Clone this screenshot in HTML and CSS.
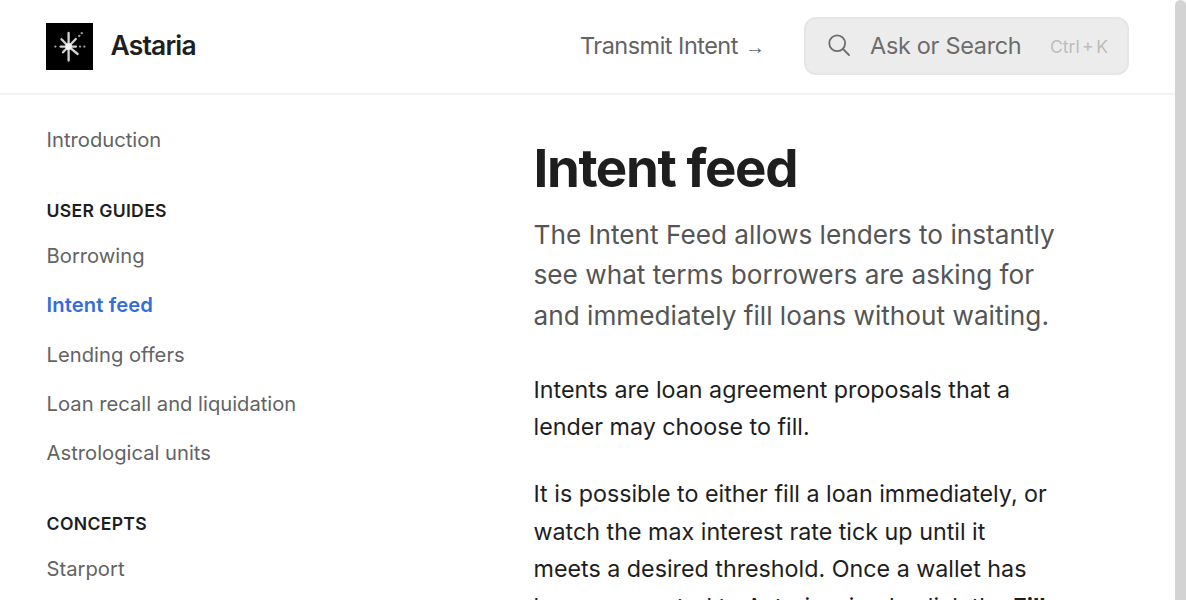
FILE: index.html
```
<!DOCTYPE html>
<html lang="en">
<head>
<meta charset="utf-8">
<title>Intent feed | Astaria</title>
<link rel="stylesheet" href="styles.css">
</head>
<body>
<div class="page">
  <div class="site">
    <header class="header">
      <a class="brand">
        <svg class="logo" viewBox="0 0 47 47">
          <rect width="47" height="47" fill="#000"/>
          <g stroke="#d2d2d2" stroke-width="2.3" stroke-linecap="round" fill="none">
            <path d="M22.600 10v27.600M15.500 16.300l7.100 7.300M22.600 23.500l7.200-7.500M22.600 23.500l-5.600 5.800M22.600 23.500l9 7.500"/>
            <path d="M14.500 23.600h15.500"/>
            <path d="M9.300 23.600h.1M34 23.600h.1M38.300 23.600h.1M33.200 13h.1M35.700 10.200h.1" stroke="#999"/>
          </g>
          <circle cx="22.600" cy="23.600" r="3.300" fill="#f4f4f4"/>
        </svg>
        <span class="brand-name">Astaria</span>
      </a>
      <a class="transmit">Transmit Intent <span class="arrow">→</span></a>
      <div class="search">
        <svg class="search-icon" viewBox="0 0 24 24" fill="none" stroke="#6c6c6c" stroke-width="1.8" stroke-linecap="round">
          <circle cx="10.200" cy="10.200" r="7.900"/>
          <path d="M16 16l6 6"/>
        </svg>
        <span class="search-label">Ask or Search</span>
        <span class="shortcut">Ctrl + K</span>
      </div>
    </header>
    <div class="columns">
      <nav class="sidebar">
        <a class="link">Introduction</a>
        <h2 class="group">User guides</h2>
        <a class="link">Borrowing</a>
        <a class="link active">Intent feed</a>
        <a class="link">Lending offers</a>
        <a class="link">Loan recall and liquidation</a>
        <a class="link">Astrological units</a>
        <h2 class="group">Concepts</h2>
        <a class="link">Starport</a>
      </nav>
      <main class="content">
        <h1 class="title">Intent feed</h1>
        <p class="lead">The Intent Feed allows lenders to instantly see what terms borrowers are asking for and immediately fill loans without waiting.</p>
        <p class="text">Intents are loan agreement proposals that a lender may choose to fill.</p>
        <p class="text">It is possible to either fill a loan immediately, or watch the max interest rate tick up until it meets a desired threshold. Once a wallet has been connected to Astaria, simply click the <strong>Fill</strong></p>
      </main>
    </div>
  </div>
  <div class="scrollbar"><div class="thumb"></div></div>
</div>
</body>
</html>
```
FILE: styles.css
```
* { box-sizing: border-box; }
body {
  margin: 0;
  background: #fff;
  color: #1e1e1e;
  font-family: Inter, "Liberation Sans", sans-serif;
}
.page { display: flex; height: 600px; overflow: hidden; }
.site { flex: 1; min-width: 0; }
.header {
  display: flex;
  align-items: center;
  height: 94.500px;
  padding: 0 46px;
  border-bottom: 2px solid #f2f2f2;
}
.brand { display: flex; align-items: center; gap: 17.500px; margin-right: auto; }
.logo { width: 47px; height: 47px; display: block; }
.brand-name { font-size: 26.400px; font-weight: 600; letter-spacing: -0.8px; line-height: 36px; padding-bottom: 2px; }
.transmit { font-size: 23.460px; letter-spacing: -0.5px; color: #636363; margin-right: 39px; line-height: 36px; }
.arrow { font-family: "Liberation Sans", sans-serif; font-size: 20px; letter-spacing: 0; margin-left: 1px; line-height: 1; }
.search {
  display: flex;
  align-items: center;
  width: 325px;
  height: 58px;
  padding: 0 19px 0 21px;
  background: #ececec;
  border: 2px solid #e6e6e6;
  border-radius: 12px;
}
.search-icon { width: 24px; height: 24px; margin: 0 19px 2px 0; }
.search-label { font-size: 23.460px; letter-spacing: -0.3px; color: #6c6c6c; padding-bottom: 2px; }
.shortcut { margin-left: auto; font-size: 17.600px; word-spacing: -2.500px; color: #bcbcbc; }
.columns { display: flex; }
.sidebar { width: 487px; padding: 20.500px 46px 0 46.600px; }
.link {
  display: block;
  height: 49.200px;
  line-height: 49.200px;
  font-size: 20.200px;
  color: #636363;
}
.active { color: #346ddb; font-weight: 600; letter-spacing: 0.1px; }
.group {
  margin: 27px 0 0;
  height: 40px;
  line-height: 40px;
  font-size: 17.600px;
  font-weight: 600;
  text-transform: uppercase;
  letter-spacing: 0.32px;
}
.content { width: 570px; padding: 40.500px 0 0 46.500px; }
.title { margin: 0; font-size: 52.800px; line-height: 66px; font-weight: 700; letter-spacing: -1.380px; }
.lead { margin: 13.500px 0 0; font-size: 26.200px; line-height: 40.500px; color: #555; }
.text { margin: 29.700px 0 0; font-size: 23.280px; line-height: 37.540px; }
.lead + .text { margin-top: 34.500px; }
.scrollbar { width: 11px; background: #fafafa; }
.thumb { height: 620px; border-radius: 6px; background: #d3d3d3; }
```
